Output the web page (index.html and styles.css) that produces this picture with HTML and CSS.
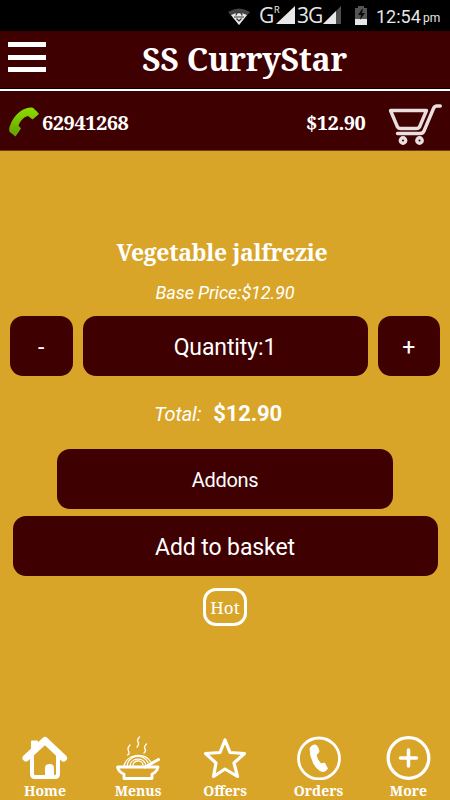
FILE: index.html
```html
<!DOCTYPE html>
<html lang="en">
<head>
<meta charset="utf-8">
<meta name="viewport" content="width=device-width, initial-scale=1">
<title>SS CurryStar</title>
<link rel="stylesheet" href="styles.css">
</head>
<body>
<div class="app">
  <div class="status">
    <svg class="status-wifi" width="24" height="20" viewBox="0 0 24 20"><path d="M1 5Q12-2 23 5L12 18Z" fill="#444"/><path d="M4 8Q12 4 20 8L12 18Z" fill="#e8e8e8"/><path d="M9 8.500a3 3 0 0 1 6 0M7 10h10M9.500 11.500L12 14l2.500-2.500" stroke="#333" stroke-width="1.200" fill="none"/></svg>
    <span class="net net-g">G</span><span class="roam">R</span>
    <svg class="sig-a" width="19" height="18" viewBox="0 0 19 18"><path d="M19 0v18H0Z" fill="#e8e8e8"/></svg>
    <span class="net net-3g">3G</span>
    <svg class="sig-b" width="18" height="18" viewBox="0 0 18 18"><path d="M18 0v18H0Z" fill="#505050"/><path d="M13 5v13H0Z" fill="#e8e8e8"/></svg>
    <svg class="battery" width="12" height="19" viewBox="0 0 12 19"><path d="M3 0h6v2h3v17H0V2h3Z" fill="#555"/><path d="M0 13h12v6H0Z" fill="#e8e8e8"/><path d="M7 3L3 9h3l-1 5 5-7H7l1-4Z" fill="#0a0a0a"/></svg>
    <span class="clock">12:54</span><span class="ampm">pm</span>
  </div>

  <header class="header">
    <div class="burger"><i></i><i></i><i></i></div>
    <h1 class="title">SS CurryStar</h1>
  </header>

  <div class="subbar">
    <svg class="phone" width="32" height="32" viewBox="0 0 32 32">
      <defs><linearGradient id="g" x1="0" y1="0" x2="0" y2="1"><stop offset="0" stop-color="#8ddd00"/><stop offset="1" stop-color="#62a000"/></linearGradient></defs>
      <path d="M3 27C0 25 1 21 4 15 9 6 17 1 24 1.500Q26 2 31 8L24.500 13.500 20 10Q14 11 10.500 19.500L13 22.500 7.500 30.500Z" fill="url(#g)"/>
    </svg>
    <span class="number">62941268</span>
    <span class="amount">$12.90</span>
    <svg class="cart" width="54" height="42" viewBox="0 0 54 42" fill="none" stroke="#eadede" stroke-width="3.400" stroke-linejoin="round" stroke-linecap="round"><path d="M2.500 6.500H38.500L31.500 23Q30.500 24.500 28.500 24.500H12.500Q10.500 24.500 9.500 23ZM52.300 2H49Q46.500 2 45.500 4.500L36 27Q35 29.500 32 29.500H9.500"/><circle cx="15" cy="36.500" r="2.700"/><circle cx="31.500" cy="36.500" r="2.700"/></svg>
  </div>

  <main class="main">
    <h2 class="dish">Vegetable jalfrezie</h2>
    <p class="base">Base Price:$12.90</p>
    <div class="qty">
      <button class="btn step">-</button>
      <button class="btn count">Quantity:1</button>
      <button class="btn step">+</button>
    </div>
    <p class="total"><em>Total:</em><strong>$12.90</strong></p>
    <button class="btn addons">Addons</button>
    <button class="btn basket">Add to basket</button>
    <span class="hot">Hot</span>
  </main>

  <nav class="nav">
    <a class="item home"><svg width="46" height="44" viewBox="0 0 46 44"><path d="M10 5.500h5v5L10 16Z" fill="#fff" stroke="#fff" stroke-width="2" stroke-linejoin="round"/><path d="M4 22L23 4.500 41.500 22" stroke="#fff" stroke-width="7" fill="none" stroke-linejoin="round" stroke-linecap="round"/><path d="M10 20v18q0 3 3 3h20q3 0 3-3V20" stroke="#fff" stroke-width="4" fill="none"/><path d="M23 42V32q0-4 4.500-4t4.500 4v10Z" fill="#fff"/></svg><span>Home</span></a>
    <a class="item menus"><svg width="46" height="44" viewBox="0 0 46 44" fill="none" stroke="#fff" stroke-linecap="round" stroke-linejoin="round"><path d="M2.500 31H43Q42 36 37 38V42.500H9V38Q3.500 36 2.500 31Z" stroke-width="2.800"/><path d="M43.500 23.500L30 31" stroke-width="3"/><path d="M9 30a14.500 13 0 0 1 26.500-4.500M12 30a11 10.500 0 0 1 21-3.500M15 30a8 7.500 0 0 1 15.500-2M18 30a5 4.500 0 0 1 10-1" stroke-width="1.300"/><path d="M15 9q-3 3-1.500 6t-1 4M24.500 1q-3 3-1.500 5t-1 5M31.500 8q-3 3-1.500 5t-1 4" stroke-width="1.300"/></svg><span>Menus</span></a>
    <a class="item offers"><svg width="46" height="44" viewBox="0 0 46 44"><path d="M23 4L28 16.500 42.500 17.500 32 27 35.500 40.500 23 33 11.500 40.500 14 27 3.500 17.500 18 16.500Z" stroke="#fff" stroke-width="3.200" fill="none" stroke-linejoin="round"/></svg><span>Offers</span></a>
    <a class="item orders"><svg width="46" height="44" viewBox="0 0 46 44"><circle cx="23" cy="22.500" r="20.500" stroke="#fff" stroke-width="2.800" fill="none"/><path d="M14 13Q14.500 10 18 9 20.500 8.500 21.500 11L23 15Q23 17 20 19 21 24 25 28L28.500 27 31.500 32.500Q30.500 35 27 35.500 22 35 18 28 14 20 14 13Z" fill="#fff" stroke="#fff"/></svg><span>Orders</span></a>
    <a class="item more"><svg width="46" height="44" viewBox="0 0 46 44" stroke="#fff" fill="none"><circle cx="22.500" cy="22" r="20.300" stroke-width="3.300"/><path d="M22.500 14v16M14.500 22h16" stroke-width="3.500" stroke-linecap="round"/></svg><span>More</span></a>
  </nav>
</div>
</body>
</html>
```
FILE: styles.css
```css
* { box-sizing: border-box; margin: 0; padding: 0; }

body { width: 450px; height: 800px; overflow: hidden; background: #d9a528; }

.app {
  display: flex;
  flex-direction: column;
  height: 800px;
  color: #fff;
  font-family: Roboto, "Liberation Sans", sans-serif;
}

.status {
  display: flex;
  align-items: flex-start;
  height: 31px;
  background: #000;
  color: #e6e6e6;
  line-height: 1;
  white-space: nowrap;
}
.status > * { flex: none; }
.status-wifi { margin: 7px 0 0 227px; }
.net { margin-top: 5px; font-family: "Open Sans", "Noto Sans", sans-serif; font-size: 21px; }
.net-g { width: 15px; margin-left: 8px; }
.roam { width: 6px; margin-top: 6px; font-size: 9px; }
.sig-a { margin: 6px 0 0 -4px; }
.net-3g { width: 26px; margin-left: 2px; letter-spacing: -1px; }
.sig-b { margin: 6px 0 0 0; }
.battery { margin: 6px 0 0 14px; }
.clock { margin: 8px 0 0 9px; width: 46px; font-size: 18px; letter-spacing: 0; }
.ampm { margin: 12px 0 0 1px; font-size: 12px; }

.header {
  display: flex;
  align-items: flex-start;
  height: 58px;
  background: #3e0000;
  border-bottom: 1px solid #000;
}
.burger { display: flex; flex-direction: column; gap: 7.500px; width: 38px; margin: 11px 0 0 7.500px; }
.burger i { height: 5px; background: #fff; }
.title {
  margin-left: 96.500px;
  font: bold 32px/56px "Noto Serif", "Droid Serif", "DejaVu Serif Condensed", "DejaVu Serif", serif;
  letter-spacing: -0.2px;
  white-space: nowrap;
}

.subbar {
  display: flex;
  align-items: flex-start;
  height: 62px;
  background: #3e0000;
  border-top: 2px solid #fff;
  border-bottom: 1px solid #6e4210;
  font: bold 20px/64px "Noto Serif", "Droid Serif", "DejaVu Serif Condensed", "DejaVu Serif", serif;
  letter-spacing: -0.5px;
}
.phone { margin: 15px 0 0 8px; }
.number { width: 90px; margin-left: 2px; }
.amount { width: 61px; margin-left: 174px; }
.cart { margin: 13px 0 0 21px; flex: none; }

.main { display: flex; flex: 1; flex-direction: column; align-items: center; }
.dish {
  margin: 85px 6px 0 0;
  font: bold 23px/32px "Noto Serif", "Droid Serif", "DejaVu Serif Condensed", "DejaVu Serif", serif;
  letter-spacing: -0.32px;
  white-space: nowrap;
}
.base { margin-top: 14px; font-size: 18px; line-height: 22px; font-style: italic; letter-spacing: -0.1px; }
.btn {
  height: 60px;
  padding-top: 2px;
  border: 0;
  border-radius: 13px;
  background: #3e0000;
  color: #fff;
  font-family: inherit;
  font-size: 23px;
  letter-spacing: -0.1px;
}
.qty { display: flex; gap: 10px; width: 430px; margin-top: 12px; }
.step { width: 62.500px; }
.count { flex: 1; }
.total { display: flex; align-items: baseline; gap: 12px; margin: 24px 14px 0 0; height: 28px; line-height: 28px; letter-spacing: -0.15px; }
.total em { font-size: 20px; }
.total strong { font-size: 22px; }
.addons { width: 336px; margin-top: 21px; padding-top: 1px; font-size: 20px; letter-spacing: -0.3px; }
.basket { width: 425px; margin-top: 7px; }
.hot {
  width: 44px;
  height: 38px;
  margin-top: 12px;
  border: 3px solid #fff;
  border-radius: 13px;
  font: 17px/34px "Noto Serif", "Droid Serif", "DejaVu Serif Condensed", "DejaVu Serif", serif;
  text-align: center;
}

.nav { display: grid; grid-template-columns: 90px 96px 78px 109px 71px; height: 64px; }
.item {
  display: flex;
  flex-direction: column;
  align-items: center;
  font: bold 14px/22px "Noto Serif", "Droid Serif", "DejaVu Serif Condensed", "DejaVu Serif", serif;
}
.item svg { flex: none; }
```
